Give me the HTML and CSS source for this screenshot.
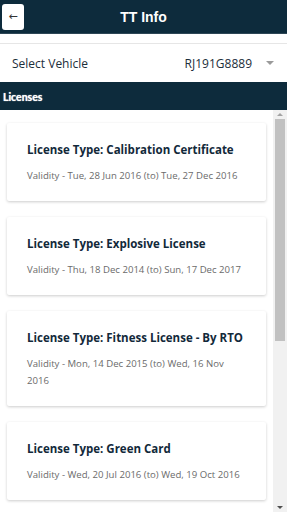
FILE: index.html
```html
<!DOCTYPE html>
<html lang="en">
<head>
    <meta charset="UTF-8">
    <meta name="viewport" content="width=device-width, initial-scale=1.0">
    <title>TT Info</title>
    <link rel="stylesheet" href="styles.css">
</head>
<body>
    <div class="app">
        <!-- top bar -->
        <div class="topbar">
            <button class="back">&#8592;</button>
            <h1>TT Info</h1>
        </div>
        <div class="gap"></div>
        <!-- vehicle picker -->
        <div class="vehicle">
            <span class="label">Select Vehicle</span>
            <span class="value">RJ191G8889</span>
            <span class="caret"></span>
        </div>
        <div class="section">Licenses</div>
        <div class="content">
            <!-- license list -->
            <div class="list">
                <div class="card">
                    <h2>License Type: Calibration Certificate</h2>
                    <p>Validity - Tue, 28 Jun 2016 (to) Tue, 27 Dec 2016</p>
                </div>
                <div class="card">
                    <h2>License Type: Explosive License</h2>
                    <p>Validity - Thu, 18 Dec 2014 (to) Sun, 17 Dec 2017</p>
                </div>
                <div class="card">
                    <h2>License Type: Fitness License - By RTO</h2>
                    <p>Validity - Mon, 14 Dec 2015 (to) Wed, 16 Nov 2016</p>
                </div>
                <div class="card">
                    <h2>License Type: Green Card</h2>
                    <p>Validity - Wed, 20 Jul 2016 (to) Wed, 19 Oct 2016</p>
                </div>
            </div>
            <!-- scrollbar -->
            <div class="scrollbar">
                <span class="arrow up"></span>
                <div class="track"><div class="thumb"></div></div>
                <span class="arrow down"></span>
            </div>
        </div>
    </div>
</body>
</html>
```
FILE: styles.css
```css
*{
    margin: 0;
    padding: 0;
    box-sizing: border-box;
}
html, body{
    height: 100%;
}
body{
    font-family: "Open Sans", "Noto Sans", sans-serif;
    background: #ffffff;
}
.app{
    height: 100%;
    display: flex;
    flex-direction: column;
}
.topbar{
    height: 34px;
    flex: none;
    background-color: #0d2b3c;
    border-bottom: 1px solid #2d4655;
    display: flex;
    align-items: center;
    position: relative;
}
.back{
    width: 22px;
    height: 26px;
    margin-left: 2px;
    background: #ffffff;
    border: none;
    border-radius: 3px;
    font-size: 11px;
    color: #333333;
    font-family: "DejaVu Sans", sans-serif;
    position: relative;
    z-index: 1;
}
.topbar h1{
    position: absolute;
    left: 0;
    right: 0;
    text-align: center;
    font-family: "Liberation Sans", Arial, sans-serif;
    font-size: 14px;
    font-weight: bold;
    color: #ffffff;
}
.gap{
    height: 10px;
    flex: none;
    border-bottom: 1px solid #e6e6e6;
}
.vehicle{
    height: 38px;
    flex: none;
    display: flex;
    align-items: center;
    padding: 0 13px 0 12px;
    font-size: 12px;
    color: #1c2e3a;
}
.vehicle .label{
    flex: 1;
}
.vehicle .caret{
    width: 0;
    height: 0;
    margin-left: 14px;
    border-left: 4px solid transparent;
    border-right: 4px solid transparent;
    border-top: 4px solid #9a9a9a;
}
.section{
    height: 28px;
    flex: none;
    background-color: #0d2b3c;
    color: #ffffff;
    font-family: "Lato", sans-serif;
    font-weight: bold;
    font-size: 10.5px;
    padding: 9px 0 0 3px;
    text-shadow: 0 0 1px #ffffff;
}
.content{
    flex: 1;
    min-height: 0;
    display: flex;
}
.list{
    flex: 1;
    overflow: hidden;
    padding: 13px 7px;
    display: flex;
    flex-direction: column;
    gap: 16px;
}
.card{
    flex: none;
    background: #ffffff;
    border-radius: 2px;
    box-shadow: 0 1px 3px rgba(0, 0, 0, 0.2);
    padding: 19px 21px 17px 20px;
}
.card h2{
    font-size: 11.5px;
    line-height: 16px;
    font-weight: bold;
    color: #12293a;
    margin-bottom: 9px;
}
.card p{
    font-size: 9.6px;
    line-height: 17px;
    color: #6b6b6b;
}
/* drawn scrollbar */
.scrollbar{
    width: 14px;
    flex: none;
    background: #f1f1f1;
    display: flex;
    flex-direction: column;
    align-items: center;
}
.arrow{
    width: 0;
    height: 0;
    margin: 3px 0;
    border-left: 3px solid transparent;
    border-right: 3px solid transparent;
}
.arrow.up{
    border-bottom: 3px solid #a3a3a3;
}
.arrow.down{
    border-top: 3px solid #505050;
}
.track{
    flex: 1;
    width: 100%;
    padding: 0 2px;
}
.thumb{
    height: 222px;
    background: #c1c1c1;
}
```
